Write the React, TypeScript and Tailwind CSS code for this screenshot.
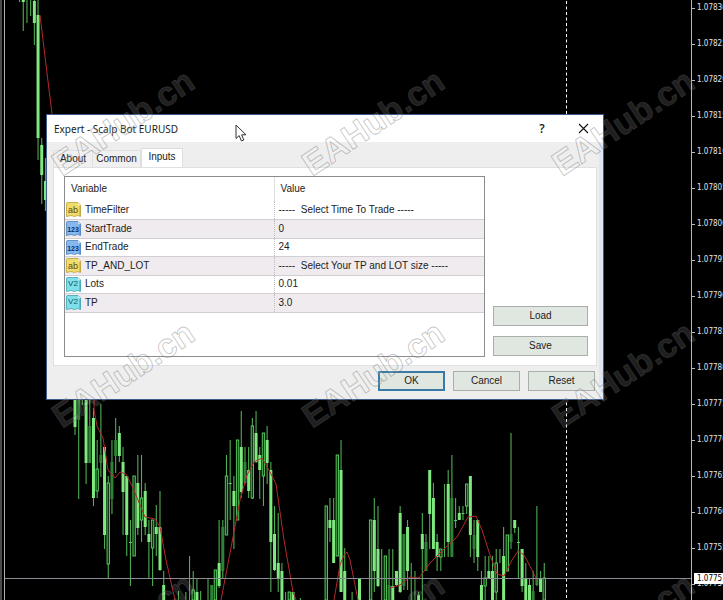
import React from "react";

type Kind = "up" | "down" | "dark" | "tick";
// slot, high, low, body top, body bottom, kind
type Candle = [number, number, number, number, number, Kind];

const SLOT = 3.695;
const ORIGIN = 75;

const candles: Candle[] = [
  [-15, 0, 2, 0, 0, "tick"], [-14, 0, 31, 0, 2, "down"], [-13, 0, 23, 0, 0, "tick"], [-12, 0, 16, 0, 0, "tick"],
  [-11, 0, 45, 1, 23, "down"], [-10, 0, 160, 15, 138, "down"], [-9, 138, 204, 145, 175, "down"], [-8, 158, 211, 181, 200, "down"],
  [0, 395, 435, 395, 427, "down"], [1, 395, 499, 395, 420, "dark"], [2, 395, 405, 395, 395, "tick"], [3, 395, 484, 395, 463, "down"],
  [4, 395, 463, 426, 463, "dark"], [5, 408, 506, 418, 498, "down"], [6, 440, 498, 469, 491, "up"], [7, 404, 477, 455, 463, "dark"],
  [8, 447, 549, 447, 535, "down"], [9, 476, 578, 483, 564, "up"], [10, 440, 514, 462, 499, "dark"], [11, 418, 473, 440, 456, "dark"],
  [12, 426, 462, 433, 456, "down"], [13, 447, 535, 462, 492, "down"], [14, 476, 556, 476, 535, "down"], [15, 520, 586, 542, 542, "tick"],
  [16, 476, 556, 476, 556, "up"], [17, 455, 535, 483, 528, "down"], [18, 455, 542, 498, 520, "up"], [19, 483, 535, 491, 527, "down"],
  [20, 520, 578, 534, 542, "down"], [21, 520, 586, 520, 548, "up"], [22, 505, 556, 527, 534, "down"], [23, 491, 571, 527, 570, "down"],
  [24, 571, 600, 585, 600, "down"], [28, 591, 600, 600, 600, "tick"], [30, 592, 600, 600, 600, "tick"], [31, 556, 600, 600, 600, "tick"],
  [32, 571, 600, 590, 600, "up"], [33, 578, 600, 592, 600, "down"], [34, 591, 600, 600, 600, "tick"], [36, 578, 600, 600, 600, "tick"],
  [37, 585, 600, 585, 600, "dark"], [38, 570, 600, 570, 600, "up"], [39, 520, 588, 563, 586, "down"], [40, 520, 578, 527, 571, "dark"],
  [41, 455, 535, 476, 535, "up"], [42, 440, 520, 483, 483, "tick"], [43, 476, 549, 491, 506, "down"], [44, 440, 520, 440, 520, "up"],
  [45, 411, 498, 447, 492, "down"], [46, 447, 484, 462, 483, "dark"], [47, 447, 498, 470, 491, "down"], [48, 418, 499, 426, 498, "up"],
  [49, 411, 463, 433, 462, "down"], [50, 447, 499, 455, 470, "down"], [51, 433, 506, 433, 476, "up"], [52, 426, 484, 440, 463, "down"],
  [53, 462, 592, 470, 542, "down"], [54, 506, 571, 534, 570, "down"], [55, 513, 592, 563, 578, "down"], [56, 563, 600, 571, 600, "down"],
  [57, 592, 600, 600, 600, "tick"], [58, 592, 600, 592, 600, "up"], [59, 592, 600, 592, 600, "down"], [61, 598, 600, 600, 600, "tick"],
  [68, 506, 600, 506, 600, "up"], [69, 498, 542, 520, 528, "down"], [70, 498, 563, 520, 563, "down"], [71, 455, 556, 455, 556, "up"],
  [72, 440, 592, 470, 592, "down"], [73, 548, 600, 571, 600, "down"], [75, 592, 600, 600, 600, "tick"], [77, 578, 600, 578, 600, "down"],
  [80, 520, 600, 520, 600, "up"], [81, 498, 592, 520, 571, "down"], [82, 506, 587, 549, 586, "down"], [83, 549, 600, 600, 600, "tick"],
  [84, 556, 600, 556, 600, "up"], [85, 549, 600, 585, 600, "dark"], [86, 549, 600, 586, 600, "down"], [87, 571, 586, 571, 585, "down"],
  [88, 506, 593, 513, 592, "down"], [89, 534, 590, 534, 586, "dark"], [90, 520, 590, 527, 571, "down"], [91, 563, 600, 600, 600, "tick"],
  [92, 571, 600, 600, 600, "tick"], [93, 592, 600, 595, 600, "down"], [94, 513, 600, 534, 549, "down"], [95, 534, 571, 542, 571, "dark"],
  [96, 470, 549, 470, 514, "down"], [97, 483, 549, 498, 549, "down"], [98, 534, 571, 542, 557, "down"], [99, 549, 571, 549, 557, "up"],
  [100, 484, 557, 557, 557, "tick"], [101, 470, 557, 484, 542, "down"], [102, 455, 557, 498, 557, "dark"], [103, 498, 528, 520, 520, "tick"],
  [104, 506, 520, 513, 520, "down"], [105, 506, 520, 513, 513, "tick"], [106, 484, 514, 484, 506, "up"], [107, 476, 557, 476, 535, "down"],
  [108, 520, 563, 535, 549, "dark"], [109, 520, 571, 520, 557, "down"], [110, 571, 600, 585, 600, "down"], [111, 556, 600, 578, 586, "up"],
  [112, 556, 578, 571, 578, "down"], [113, 556, 600, 571, 600, "down"], [114, 549, 600, 563, 592, "up"], [115, 549, 563, 549, 549, "tick"],
  [116, 527, 600, 556, 600, "down"], [117, 535, 571, 535, 571, "up"], [118, 433, 549, 534, 542, "dark"], [119, 520, 533, 520, 528, "down"],
  [120, 527, 578, 542, 542, "tick"], [121, 549, 592, 549, 586, "down"], [122, 563, 600, 578, 600, "down"], [123, 578, 600, 585, 600, "down"],
  [124, 571, 600, 591, 600, "dark"], [125, 506, 586, 578, 585, "dark"], [126, 571, 592, 578, 592, "down"], [127, 563, 600, 578, 600, "up"],
];

const averages = [
  "40,15 46,65 52,114",
  "94,400 94,410 97,426 103,438 108,470 115,478 120,472 126,474 133,488 145,517 155,519 160,527 166,560 175,600",
  "221,600 230,553 240,500 247,475 254,462 262,458 270,472 276,484 284,540 293,592 296,600",
  "334,600 340,565 344,555 347,552 350,560 358,600",
  "390,588 400,585 410,577 419,578 430,563 445,548 457,537 462,528 468,517 476,516 482,530 490,555 497,574 504,576 512,560 518,551 524,555 532,570 537,580",
];

const prices = Array.from({ length: 17 }, (_, i) => (1.0783 - i * 0.00005).toFixed(5));

function CandleMark({ candle }: { candle: Candle }) {
  const [slot, high, low, top, bottom, kind] = candle;
  const x = ORIGIN + slot * SLOT;
  const h = Math.max(bottom - top, 1);
  return (
    <g>
      <line x1={x} x2={x} y1={high} y2={low} stroke="#4fae53" strokeWidth="1.1" />
      {kind === "down" && <rect x={x - 1.5} y={top} width="3" height={h} fill="#7fe97f" />}
      {kind === "dark" && <rect x={x - 1.5} y={top} width="3" height={h} fill="#2f8136" />}
      {kind === "up" && <rect x={x - 1.2} y={top} width="2.4" height={h} fill="#0c3a10" stroke="#5fd065" strokeWidth="0.9" />}
      {kind === "tick" && top > high && top < low && <rect x={x - 1.5} y={top} width="3" height="1" fill="#5fd065" />}
    </g>
  );
}

function Chart() {
  return (
    <svg className="h-full min-w-0 flex-1" role="img" aria-label="EURUSD price chart">
      <rect x="0" y="0" width="2" height="100%" fill="#4a4a4a" />
      <rect x="4" y="0" width="1" height="100%" fill="#b0b0b0" />
      <line x1="566.5" x2="566.5" y1="1" y2="100%" stroke="#ffffff" strokeDasharray="3 2.5" />
      {candles.map((c) => (
        <CandleMark key={c[0]} candle={c} />
      ))}
      {averages.map((points) => (
        <polyline key={points} points={points} fill="none" stroke="#b5282c" strokeWidth="1" />
      ))}
      <line x1="5" x2="100%" y1="578.5" y2="578.5" stroke="#8c8c96" />
    </svg>
  );
}

function PriceAxis() {
  return (
    <div className="relative w-8 shrink-0 overflow-hidden border-l border-[#b8b8b8] pb-1 font-['DejaVu_Sans_Condensed','DejaVu_Sans',sans-serif] text-[8px] leading-4 text-[#e4e4e4]">
      {prices.map((p) => (
        <div key={p} className="mb-5 flex h-4 items-center gap-0.5">
          <span className="h-px w-[3px] shrink-0 bg-[#b8b8b8]" />
          <span>{p}</span>
        </div>
      ))}
      <div className="absolute top-[573px] left-0.5 h-[11px] w-full bg-white pl-[3px] leading-[11px] text-black">1.0775</div>
    </div>
  );
}

const iconStyles = {
  ab: { label: "ab", fill: "#f0dc6a", edge: "#b9a23a", ink: "#5c4a10", size: 9 },
  int: { label: "123", fill: "#86b8ee", edge: "#4b80be", ink: "#0d2f66", size: 7 },
  dbl: { label: "V2", fill: "#7fe0ea", edge: "#3fa3b4", ink: "#0c5566", size: 8 },
};

function TypeIcon({ type }: { type: keyof typeof iconStyles }) {
  const s = iconStyles[type];
  return (
    <svg className="size-[15px] shrink-0" viewBox="0 0 15 15" aria-hidden="true">
      <path d="M.5 1.5 Q.5 .5 1.5 .5 H12 L14.5 3 V14.5 L11.5 13.5 L8.5 14.5 L5 13.5 L.5 14.5 Z" fill={s.fill} stroke={s.edge} strokeWidth="0.8" />
      <path d="M12 .5 V3 H14.5 Z" fill="#ffffff" fillOpacity="0.6" />
      <path d="M14 4 V13.8" fill="none" stroke={s.edge} strokeWidth="1" />
      <text x="7" y={type === "dbl" ? 9 : 10.5} textAnchor="middle" fontSize={s.size} fontWeight={type === "int" ? 700 : 400} fill={s.ink} className="font-['Liberation_Sans',sans-serif]">
        {s.label}
      </text>
    </svg>
  );
}

const rows: { type: keyof typeof iconStyles; name: string; value: string }[] = [
  { type: "ab", name: "TimeFilter", value: "-----  Select Time To Trade -----" },
  { type: "int", name: "StartTrade", value: "0" },
  { type: "int", name: "EndTrade", value: "24" },
  { type: "ab", name: "TP_AND_LOT", value: "-----  Select Your TP and LOT size -----" },
  { type: "dbl", name: "Lots", value: "0.01" },
  { type: "dbl", name: "TP", value: "3.0" },
];

function InputsTable() {
  return (
    <div className="h-[181px] min-w-0 flex-1 border border-[#8a8c90] bg-white">
      <table className="w-full table-fixed border-collapse text-left">
        <thead>
          <tr className="h-6">
            <th className="w-[209px] border-r border-[#dedede] p-0 pl-1.5 font-normal">Variable</th>
            <th className="p-0 pl-1.5 font-normal">Value</th>
          </tr>
        </thead>
        <tbody>
          {rows.map((r) => (
            <tr key={r.name} className="odd:h-[18px] even:h-[19px] even:border-y even:border-[#d2cfd2] even:bg-[#f0ebef]">
              <td className="border-r border-dotted border-r-[#bdbdbd] p-0 pl-px">
                <div className="flex items-center gap-1">
                  <TypeIcon type={r.type} />
                  {r.name}
                </div>
              </td>
              <td className="p-0 pl-1 whitespace-pre">{r.value}</td>
            </tr>
          ))}
        </tbody>
      </table>
    </div>
  );
}

const plainButton = "h-5 border border-[#a9aeaa] bg-[#e0e6e0]";

function ExpertDialog() {
  return (
    <div role="dialog" aria-label="Expert - Scalp Bot EURUSD" className="absolute top-[114px] left-[46px] w-[558px] border border-[#3c5a8c] bg-[#eeeeee] text-[#1c1c1c]">
      <header className="flex h-[27px] items-center bg-white pr-3.5 pl-[7px]">
        <h1 className="flex-1 font-['Noto_Sans',sans-serif] text-[10px]">Expert - Scalp Bot EURUSD</h1>
        <button aria-label="Help" className="mr-[30px] w-3 text-center font-['Open_Sans',sans-serif] text-[12px] font-semibold">?</button>
        <button aria-label="Close">
          <svg className="size-[11px]" viewBox="0 0 11 11" aria-hidden="true">
            <path d="M1 1 L10 10 M10 1 L1 10" stroke="#111111" strokeWidth="1.1" />
          </svg>
        </button>
      </header>
      <div className="border-r-4 border-[#dfe7f6] pl-[6px]">
        <div role="tablist" className="flex h-[25px] items-end">
          <button role="tab" aria-selected="false" className="h-[17px] w-10 border border-b-0 border-[#e0e0e0] bg-[#f0f0f0]">About</button>
          <button role="tab" aria-selected="false" className="h-[17px] w-12 border border-b-0 border-l-0 border-[#e0e0e0] bg-[#f0f0f0]">Common</button>
          <button role="tab" aria-selected="true" className="h-[19px] w-[42px] border border-b-0 border-[#dddddd] bg-white pb-0.5">Inputs</button>
        </div>
        <div role="tabpanel" className="mr-0.5 flex gap-2 border border-[#e0e0e0] bg-white p-2 pl-2.5">
          <InputsTable />
          <div className="flex w-[95px] flex-col justify-end gap-2.5 pb-px">
            <button className={plainButton}>Load</button>
            <button className={plainButton}>Save</button>
          </div>
        </div>
        <footer className="flex justify-end gap-2 pt-[5px] pr-1 pb-2">
          <button className="h-5 w-[67px] border-2 border-[#3a7ba6] bg-[#e0e6e0]">OK</button>
          <button className={`${plainButton} w-[67px]`}>Cancel</button>
          <button className={`${plainButton} w-[67px]`}>Reset</button>
        </footer>
      </div>
    </div>
  );
}

const marks = [62, 312, 562].flatMap((x) => [177, 429, 681].map((y) => ({ x, y })));

function Watermark() {
  return (
    <svg className="pointer-events-none absolute inset-0 size-full" aria-hidden="true">
      {marks.map(({ x, y }) => (
        <text
          key={`${x}-${y}`}
          transform={`translate(${x} ${y}) rotate(-33.7)`}
          className="font-['Liberation_Sans',sans-serif] text-[34px] font-bold"
          fill="#ffffff"
          fillOpacity="0.12"
          stroke="#606060"
          strokeOpacity="0.38"
          strokeWidth="0.9"
          strokeLinejoin="round"
        >
          EAHub.cn
        </text>
      ))}
    </svg>
  );
}

export default function App() {
  return (
    <main className="relative flex h-screen overflow-hidden bg-black font-['Liberation_Sans',sans-serif] text-[10px] leading-4">
      <Chart />
      <PriceAxis />
      <ExpertDialog />
      <svg className="absolute top-[124px] left-[235px] h-[19px] w-3" viewBox="0 0 12 19" aria-hidden="true">
        <path d="M1 1 V14.5 L4.2 11.6 L6.4 17 L8.8 16 L6.6 10.8 H11 Z" fill="#ffffff" stroke="#333333" />
      </svg>
      <Watermark />
    </main>
  );
}
